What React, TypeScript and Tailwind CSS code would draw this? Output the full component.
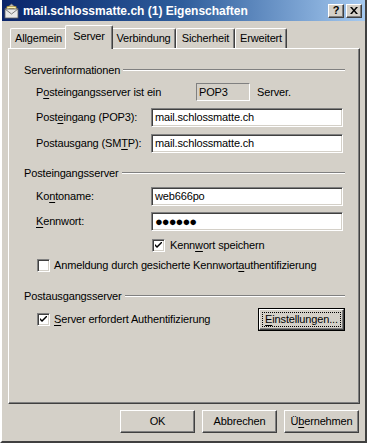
import React from 'react';

const font = "font-['Liberation_Sans',Arial,sans-serif] text-[11px] tracking-[-0.15px] text-black";
const sunken =
  'border border-t-[#808080] border-l-[#808080] border-b-white border-r-white shadow-[inset_1px_1px_0_#404040,inset_-1px_-1px_0_#d4d0c8]';
const raised =
  'border border-t-white border-l-white border-b-[#404040] border-r-[#404040] shadow-[inset_-1px_-1px_0_#808080]';

function U({ children }: { children: React.ReactNode }) {
  return <span className="underline underline-offset-2">{children}</span>;
}

function GroupLabel({ children }: { children: React.ReactNode }) {
  return (
    <div className="flex h-[14px] items-center gap-[3px]">
      <span className="whitespace-nowrap">{children}</span>
      <div className="h-0 flex-1 border-t border-b border-t-[#808080] border-b-white" />
    </div>
  );
}

function Field({ label, value, mt }: { label: React.ReactNode; value: React.ReactNode; mt: string }) {
  return (
    <div className={`flex h-[19px] items-center ${mt}`}>
      <div className="ml-[12px] w-[115px] whitespace-nowrap">{label}</div>
      <div className={`flex h-[19px] w-[192px] items-center bg-white px-[3px] ${sunken}`}>{value}</div>
    </div>
  );
}

function CheckBox({ checked }: { checked: boolean }) {
  return (
    <div className={`flex h-[13px] w-[13px] shrink-0 items-center justify-center bg-white ${sunken}`}>
      {checked && (
        <svg width="7" height="7" viewBox="0 0 7 7">
          <path d="M0 2 L0 4 L2 6 L7 1 L7 -1 L2 4 Z" fill="#000" />
        </svg>
      )}
    </div>
  );
}

function Tab({ label, w, selected }: { label: string; w: string; selected?: boolean }) {
  return (
    <div
      className={`flex items-center justify-center rounded-t-[2px] border-t border-l border-r border-t-white border-l-white border-r-[#404040] bg-[#d4d0c8] shadow-[inset_-1px_0_0_#808080] ${w} ${
        selected ? 'relative z-10 -mx-[2px] -mb-[1px] h-[24px] pb-[3px]' : 'h-[20px]'
      }`}
    >
      {label}
    </div>
  );
}

function Button({ children, focused }: { children: React.ReactNode; focused?: boolean }) {
  if (focused) {
    return (
      <div className="h-[23px] w-[87px] border border-black">
        <div className={`flex h-full w-full items-center justify-center p-[2px] ${raised}`}>
          <div className="flex h-full w-full items-center justify-center border border-dotted border-black">
            {children}
          </div>
        </div>
      </div>
    );
  }
  return (
    <div className={`flex h-[23px] w-[75px] items-center justify-center ${raised}`}>{children}</div>
  );
}

export default function App() {
  return (
    <div
      className={`flex h-[443px] w-[367px] flex-col border-l-2 border-r-2 border-b-2 border-l-white border-r-[#404040] border-b-[#404040] bg-[#d4d0c8] ${font}`}
    >
      {/* Title bar */}
      <div className="flex h-[21px] shrink-0 items-center bg-linear-to-r from-[#0a246a] via-[#2f5e9c] to-[#a6caf0] pl-[1px] pr-[3px]">
        <svg width="17" height="16" viewBox="0 0 17 16" className="shrink-0">
          <path d="M2 6 L8.5 1 L15 6 Z" fill="#c0c0c0" stroke="#606060" strokeWidth="0.8" />
          <rect x="4" y="3.5" width="9" height="7" fill="#fff4b0" stroke="#a08020" strokeWidth="0.6" />
          <path d="M5.5 5.5 H11.5 M5.5 7 H11.5" stroke="#806020" strokeWidth="0.6" />
          <rect x="2" y="6" width="13" height="9" fill="#e8e8e8" stroke="#606060" strokeWidth="0.8" />
          <path d="M2 6 L8.5 11 L15 6" fill="none" stroke="#606060" strokeWidth="0.8" />
        </svg>
        <span className="ml-[3px] whitespace-nowrap text-[12px] font-bold tracking-normal text-white">
          mail.schlossmatte.ch (1) Eigenschaften
        </span>
        <div className="ml-auto flex gap-[2px]">
          <div className={`flex h-[14px] w-[16px] items-center justify-center bg-[#d4d0c8] text-[11px] font-bold leading-none ${raised}`}>
            ?
          </div>
          <div className={`flex h-[14px] w-[16px] items-center justify-center bg-[#d4d0c8] ${raised}`}>
            <svg width="8" height="7" viewBox="0 0 8 7">
              <path d="M0 0 L2 0 L4 2.5 L6 0 L8 0 L5 3.5 L8 7 L6 7 L4 4.5 L2 7 L0 7 L3 3.5 Z" fill="#000" />
            </svg>
          </div>
        </div>
      </div>

      {/* Tabs + panel */}
      <div className="mt-[4px] pl-[6px]">
        <div className="flex h-[23px] items-end pl-[2px]">
          <Tab label="Allgemein" w="w-[57px]" />
          <Tab label="Server" w="w-[48px]" selected />
          <Tab label="Verbindung" w="w-[65px]" />
          <Tab label="Sicherheit" w="w-[59px]" />
          <Tab label="Erweitert" w="w-[52px]" />
        </div>
        <div className="h-[356px] w-[352px] border border-t-white border-l-white border-r-[#404040] border-b-[#404040] pt-[14px] pl-[15px] pr-[14px] shadow-[inset_-1px_-1px_0_#808080]">
          <GroupLabel>Serverinformationen</GroupLabel>
          <div className="mt-[6px] flex h-[18px] items-center">
            <div className="ml-[12px] w-[160px] whitespace-nowrap">
              P<U>o</U>steingangsserver ist ein
            </div>
            <div className="flex h-[18px] w-[54px] items-center border border-t-[#808080] border-l-[#808080] border-b-white border-r-white px-[2px]">
              POP3
            </div>
            <span className="ml-[7px]">Server.</span>
          </div>
          <Field
            mt="mt-[7px]"
            label={
              <>
                Post<U>e</U>ingang (POP3):
              </>
            }
            value="mail.schlossmatte.ch"
          />
          <Field
            mt="mt-[7px]"
            label={
              <>
                Postausgang (SM<U>T</U>P):
              </>
            }
            value="mail.schlossmatte.ch"
          />

          <div className="mt-[13px]">
            <GroupLabel>Posteingangsserver</GroupLabel>
          </div>
          <Field
            mt="mt-[7px]"
            label={
              <>
                Ko<U>n</U>toname:
              </>
            }
            value="web666po"
          />
          <Field
            mt="mt-[6px]"
            label={
              <>
                <U>K</U>ennwort:
              </>
            }
            value={<span className="text-[13px] leading-none tracking-[-1px]">●●●●●●</span>}
          />
          <div className="mt-[8px] flex h-[13px] items-center gap-[5px] pl-[128px]">
            <CheckBox checked />
            <span>
              Kenn<U>w</U>ort speichern
            </span>
          </div>
          <div className="mt-[7px] flex h-[13px] items-center gap-[4px] pl-[13px]">
            <CheckBox checked={false} />
            <span className="whitespace-nowrap">
              Anmeldung durch gesicherte Kennwort<U>a</U>uthentifizierung
            </span>
          </div>

          <div className="mt-[17px]">
            <GroupLabel>Postausgangsserver</GroupLabel>
          </div>
          <div className="mt-[5px] flex h-[23px] items-center">
            <div className="flex items-center gap-[4px] pl-[13px]">
              <CheckBox checked />
              <span>
                <U>S</U>erver erfordert Authentifizierung
              </span>
            </div>
            <div className="ml-auto">
              <Button focused>
                <U>E</U>instellungen...
              </Button>
            </div>
          </div>
        </div>
      </div>

      {/* Dialog buttons */}
      <div className="mt-[6px] flex justify-end gap-[7px] pr-[6px]">
        <Button>OK</Button>
        <Button>Abbrechen</Button>
        <Button>
          Ü<U>b</U>ernehmen
        </Button>
      </div>
    </div>
  );
}
